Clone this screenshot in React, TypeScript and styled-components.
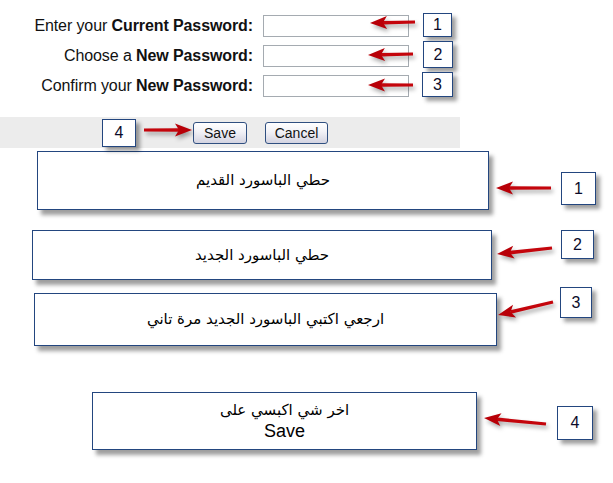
import React from "react";
import styled, { createGlobalStyle } from "styled-components";

const GlobalStyle = createGlobalStyle`
  body {
    margin: 0;
    background: #ffffff;
    font-family: "Liberation Sans", Arial, "DejaVu Sans", sans-serif;
  }
`;

const Canvas = styled.div`
  position: relative;
  width: 613px;
  height: 483px;
  overflow: hidden;
  background: #ffffff;
  color: #111;
`;

const Form = styled.div`
  display: grid;
  grid-template-columns: 253px 146px;
  grid-auto-rows: 22px;
  column-gap: 10px;
  row-gap: 8px;
  padding-top: 15px;
`;

const Label = styled.label`
  display: flex;
  align-items: center;
  justify-content: flex-end;
  font-size: 16px;
  letter-spacing: -0.1px;
  white-space: pre;
  color: #111;
  b {
    font-weight: 700;
  }
`;

const Input = styled.input`
  box-sizing: border-box;
  width: 146px;
  height: 22px;
  margin: 0;
  border: 1px solid #a5abb1;
  background: #fff;
  padding: 0 4px;
`;

const ButtonBar = styled.div`
  display: flex;
  align-items: center;
  gap: 18px;
  width: 460px;
  height: 31px;
  margin-top: 20px;
  padding-left: 193px;
  box-sizing: border-box;
  background: #ececec;
`;

const Button = styled.button<{ $w: number }>`
  width: ${(p) => p.$w}px;
  height: 22px;
  padding: 0;
  border: 1px solid #2f4f80;
  border-radius: 3px;
  background: linear-gradient(#ffffff, #f1f1f6 45%, #d3d3e0);
  font-family: "Liberation Sans", Arial, sans-serif;
  font-size: 14px;
  color: #111;
`;

const Notes = styled.div`
  display: flex;
  flex-direction: column;
  align-items: flex-start;
`;

const Callout = styled.div<{ $left: number; $top: number; $w: number; $h: number }>`
  box-sizing: border-box;
  margin-left: ${(p) => p.$left}px;
  margin-top: ${(p) => p.$top}px;
  width: ${(p) => p.$w}px;
  height: ${(p) => p.$h}px;
  display: flex;
  flex-direction: column;
  align-items: center;
  justify-content: center;
  border: 1px solid #23467f;
  background: #fff;
  box-shadow: 4px 5px 4px rgba(0, 0, 0, 0.38);
  font-family: "Liberation Sans", Arial, "DejaVu Sans", sans-serif;
  font-size: 15px;
  line-height: 21px;
  color: #000;
`;

const Arabic = styled.span`
  direction: rtl;
  font-family: "DejaVu Sans", sans-serif;
  font-size: 15px;
`;

const Big = styled.span`
  font-size: 18px;
`;

const Num = styled.div<{ $x: number; $y: number; $w: number; $h: number }>`
  position: absolute;
  left: ${(p) => p.$x}px;
  top: ${(p) => p.$y}px;
  width: ${(p) => p.$w}px;
  height: ${(p) => p.$h}px;
  box-sizing: border-box;
  display: flex;
  align-items: center;
  justify-content: center;
  border: 1px solid #23467f;
  background: #fff;
  box-shadow: 4px 4px 4px rgba(0, 0, 0, 0.38);
  font-size: 16px;
  color: #0b0b2a;
`;

const Arrows = styled.svg`
  position: absolute;
  left: 0;
  top: 0;
  width: 613px;
  height: 483px;
  pointer-events: none;
  filter: drop-shadow(2px 3px 2px rgba(0, 0, 0, 0.35));
`;

type Pt = [number, number, number, number];

const arrows: Pt[] = [
  [415, 22, 370, 23],
  [413, 54, 368, 55],
  [413, 85, 368, 85],
  [144, 130, 192, 130],
  [551, 188, 496, 188],
  [552, 248, 497, 254],
  [553, 302, 498, 315],
  [546, 424, 484, 418],
];

const nums = [
  { n: 1, x: 423, y: 13, w: 29, h: 24 },
  { n: 2, x: 423, y: 41, w: 30, h: 27 },
  { n: 3, x: 422, y: 72, w: 31, h: 25 },
  { n: 4, x: 102, y: 119, w: 34, h: 28 },
  { n: 1, x: 561, y: 172, w: 35, h: 33 },
  { n: 2, x: 561, y: 230, w: 33, h: 29 },
  { n: 3, x: 560, y: 287, w: 32, h: 31 },
  { n: 4, x: 557, y: 406, w: 36, h: 34 },
];

function Arrow({ p }: { p: Pt }) {
  const [x1, y1, x2, y2] = p;
  const a = (Math.atan2(y2 - y1, x2 - x1) * 180) / Math.PI;
  const len = Math.hypot(x2 - x1, y2 - y1);
  return (
    <g transform={`translate(${x1} ${y1}) rotate(${a})`}>
      <path d={`M0 -1.6 L${len - 13} -1.8 L${len - 13} 1.8 L0 1.6 Z`} fill="#c4050c" />
      <path d={`M${len} 0 L${len - 17} -6.5 L${len - 13} 0 L${len - 17} 6.5 Z`} fill="#b80008" />
    </g>
  );
}

export default function App() {
  return (
    <Canvas>
      <GlobalStyle />
      <Form>
        <Label>
          Enter your <b>Current Password:</b>
        </Label>
        <Input type="password" />
        <Label>
          Choose a <b>New Password:</b>
        </Label>
        <Input type="password" />
        <Label>
          Confirm your <b>New Password:</b>
        </Label>
        <Input type="password" />
      </Form>
      <ButtonBar>
        <Button $w={54}>Save</Button>
        <Button $w={63}>Cancel</Button>
      </ButtonBar>
      <Notes>
        <Callout $left={37} $top={3} $w={452} $h={59}>
          <Arabic>حطي الباسورد القديم</Arabic>
        </Callout>
        <Callout $left={32} $top={20} $w={460} $h={50}>
          <Arabic>حطي الباسورد الجديد</Arabic>
        </Callout>
        <Callout $left={34} $top={13} $w={463} $h={53}>
          <Arabic>ارجعي اكتبي الباسورد الجديد مرة تاني</Arabic>
        </Callout>
        <Callout $left={92} $top={46} $w={385} $h={58}>
          <Arabic>اخر شي اكبسي على</Arabic>
          <Big>Save</Big>
        </Callout>
      </Notes>
      {nums.map((b, i) => (
        <Num key={i} $x={b.x} $y={b.y} $w={b.w} $h={b.h}>
          {b.n}
        </Num>
      ))}
      <Arrows viewBox="0 0 613 483">
        {arrows.map((p, i) => (
          <Arrow key={i} p={p} />
        ))}
      </Arrows>
    </Canvas>
  );
}
